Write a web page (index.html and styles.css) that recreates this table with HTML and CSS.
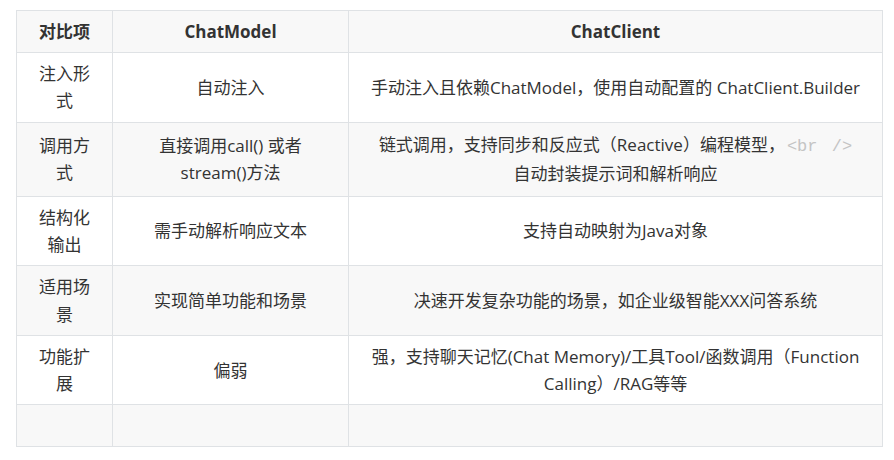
FILE: index.html
```html
<!DOCTYPE html>
<html lang="zh-CN">
<head>
<meta charset="utf-8">
<title>ChatModel vs ChatClient</title>
<link rel="stylesheet" href="styles.css">
</head>
<body>
<div class="page">
  <table class="cmp">
    <thead>
      <tr>
        <th class="c1">对比项</th>
        <th class="c2">ChatModel</th>
        <th class="c3">ChatClient</th>
      </tr>
    </thead>
    <tbody>
      <tr>
        <td>注入形式</td>
        <td>自动注入</td>
        <td>手动注入且依赖ChatModel，使用自动配置的 ChatClient.Builder</td>
      </tr>
      <tr class="tall">
        <td>调用方式</td>
        <td>直接调用call() 或者 stream()方法</td>
        <td>链式调用，支持同步和反应式（Reactive）编程模型，<span class="tag">&lt;br /&gt;</span><br>自动封装提示词和解析响应</td>
      </tr>
      <tr>
        <td>结构化输出</td>
        <td>需手动解析响应文本</td>
        <td>支持自动映射为Java对象</td>
      </tr>
      <tr class="mid">
        <td>适用场景</td>
        <td>实现简单功能和场景</td>
        <td>决速开发复杂功能的场景，如企业级智能XXX问答系统</td>
      </tr>
      <tr>
        <td>功能扩展</td>
        <td>偏弱</td>
        <td>强，支持聊天记忆(Chat Memory)/工具Tool/函数调用（Function Calling）/RAG等等</td>
      </tr>
      <tr class="empty">
        <td></td>
        <td></td>
        <td></td>
      </tr>
    </tbody>
  </table>
</div>
</body>
</html>
```

FILE: styles.css
```css
html, body {
  margin: 0;
  padding: 0;
  background: #ffffff;
}

.page {
  padding: 10px 0 0 16px;
}

.cmp {
  border-collapse: collapse;
  width: 867px;
  table-layout: fixed;
  font-family: "Open Sans", "Noto Sans CJK SC", sans-serif;
  font-size: 17px;
  line-height: 27.2px;
  color: #333333;
}

.cmp th,
.cmp td {
  box-sizing: border-box;
  border: 1px solid #dfe2e5;
  padding: 7px 14px;
  text-align: center;
  vertical-align: middle;
}

.cmp th {
  font-weight: bold;
  background: #f8f8f8;
}

.c1 { width: 96px; }
.c2 { width: 236px; }

.cmp tbody tr:nth-child(2n) td {
  background: #f8f8f8;
}

.cmp tr.tall {
  height: 74px;
}

.cmp tr.mid {
  height: 70px;
}

.cmp tr.empty {
  height: 42px;
}

.tag {
  font-family: "Liberation Mono", monospace;
  color: #c4c4c4;
  word-spacing: 4px;
  margin-left: 2px;
}
```
